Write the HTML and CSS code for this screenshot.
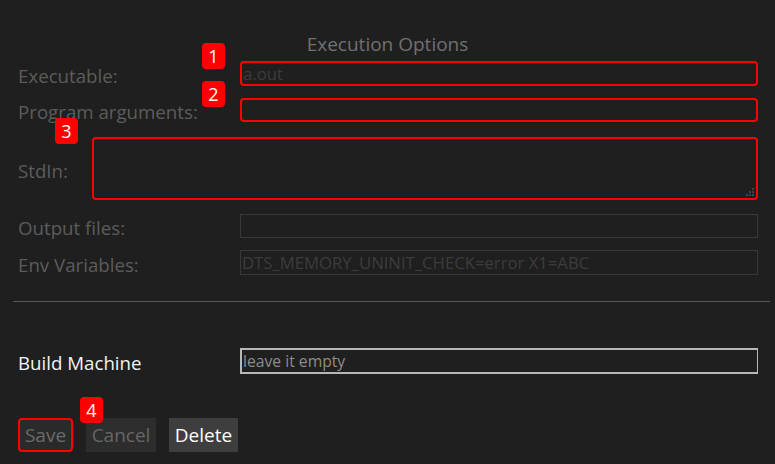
FILE: index.html
```html
<!DOCTYPE html>
<html>
<head>
<meta charset="utf-8">
<link rel="stylesheet" href="styles.css">
</head>
<body>
<div class="page">
  <div class="title">Execution Options</div>

  <div class="row row-exec">
    <label class="lbl">Executable:</label>
    <div class="field"><input class="inp hl" type="text" placeholder="a.out"></div>
    <span class="badge b1">1</span>
  </div>

  <div class="row row-args">
    <label class="lbl">Program arguments:</label>
    <div class="field"><input class="inp hl" type="text"></div>
    <span class="badge b2">2</span>
  </div>

  <div class="row row-stdin">
    <label class="lbl lbl-auto">StdIn:</label>
    <div class="field ta-wrap">
      <textarea class="ta hl"></textarea>
      <svg class="grip" width="10" height="10" viewBox="0 0 10 10">
        <rect x="7" y="1" width="2" height="2" fill="#444"/>
        <rect x="4" y="4" width="2" height="2" fill="#444"/>
        <rect x="7" y="4" width="2" height="2" fill="#444"/>
        <rect x="1" y="7" width="2" height="2" fill="#444"/>
        <rect x="4" y="7" width="2" height="2" fill="#444"/>
        <rect x="7" y="7" width="2" height="2" fill="#444"/>
      </svg>
    </div>
    <span class="badge b3">3</span>
  </div>

  <div class="row row-out">
    <label class="lbl">Output files:</label>
    <div class="field"><input class="inp dim" type="text"></div>
  </div>

  <div class="row row-env">
    <label class="lbl">Env Variables:</label>
    <div class="field"><input class="inp dim" type="text" placeholder="DTS_MEMORY_UNINIT_CHECK=error X1=ABC"></div>
  </div>

  <hr class="sep">

  <div class="row row-build">
    <label class="lbl lbl-white">Build Machine</label>
    <div class="field"><input class="inp light" type="text" placeholder="leave it empty"></div>
  </div>

  <div class="buttons">
    <button class="btn btn-save">Save</button>
    <button class="btn btn-cancel">Cancel</button>
    <button class="btn btn-delete">Delete</button>
    <span class="badge b4">4</span>
  </div>
</div>
</body>
</html>
```
FILE: styles.css
```css
* { box-sizing: border-box; }
html, body {
  margin: 0;
  padding: 0;
  background: #1f1f1f;
  width: 775px;
  height: 464px;
  overflow: hidden;
}
body {
  font-family: "Open Sans", "Noto Sans", sans-serif;
  color: #666;
}
.page {
  position: relative;
  padding: 32px 17px 0 18px;
}
.title {
  text-align: center;
  font-size: 19px;
  line-height: 24px;
  height: 24px;
  margin-left: -18px;
  margin-right: -17px;
  color: #707070;
  margin-bottom: 5px;
}
.row {
  display: flex;
  align-items: center;
}
.lbl {
  width: 222px;
  flex: none;
  font-size: 18.7px;
  line-height: 20px;
  height: 24px;
  color: #5c5c5c;
  padding-top: 4px;
  white-space: nowrap;
}
.lbl-auto { width: 74px; }
.lbl-white { color: #f2f2f2; }
.field { flex: 1; }
.inp {
  display: block;
  width: 100%;
  height: 25px;
  background: #1f1f1f;
  border: 1px solid #383838;
  font-family: "Open Sans", "Noto Sans", sans-serif;
  font-size: 16.7px;
  padding: 0 1px;
  color: #888;
  outline: none;
}
.inp::placeholder { color: #3c3c3c; }
.hl {
  border: 2px solid #ff0000;
  border-radius: 4px;
}
.row-exec { height: 25px; }
.row-args { margin-top: 12px; height: 24px; }
.row-args .inp { height: 24px; }
.row-stdin { margin-top: 15px; height: 63px; }
.ta-wrap { position: relative; }
.ta {
  display: block;
  width: 100%;
  height: 63px;
  background: #1f1f1f;
  resize: none;
  outline: none;
}
.grip {
  position: absolute;
  right: 3px;
  bottom: 3px;
}
.row-out { margin-top: 14px; height: 24px; }
.row-out .inp { height: 24px; }
.row-env { margin-top: 12px; height: 25px; }
.row-env .inp { height: 25px; }
.sep {
  border: none;
  border-top: 1px solid #585858;
  margin: 26px -12px 0 -5px;
  height: 0;
}
.row-build { margin-top: 46px; height: 26px; }
.inp.light {
  border: 2px solid #b8b8b8;
  border-right-width: 1px;
  height: 26px;
  font-size: 15.7px;
}
.inp.light::placeholder { color: #8c8c8c; }
.buttons {
  display: flex;
  gap: 13px;
  margin-top: 44px;
}
.btn {
  height: 34px;
  border: none;
  font-family: "Open Sans", "Noto Sans", sans-serif;
  font-size: 19px;
  padding: 0;
  cursor: pointer;
}
.btn-save {
  width: 55px;
  background: #2a2a2a;
  color: #6a6a6a;
  border: 2px solid #ff0000;
  border-radius: 4px;
}
.btn-cancel {
  width: 70px;
  background: #2d2d2d;
  color: #666;
}
.btn-delete {
  width: 69px;
  background: #3e3e3e;
  color: #ffffff;
}
.badge {
  position: absolute;
  width: 23px;
  height: 26px;
  background: #ff0000;
  color: #fff;
  border-radius: 4px;
  font-size: 18px;
  line-height: 26px;
  text-align: center;
}
.b1 { left: 202px; top: 43px; }
.b2 { left: 202px; top: 81px; }
.b3 { left: 55px; top: 118px; }
.b4 { left: 80px; top: 397px; }
```
